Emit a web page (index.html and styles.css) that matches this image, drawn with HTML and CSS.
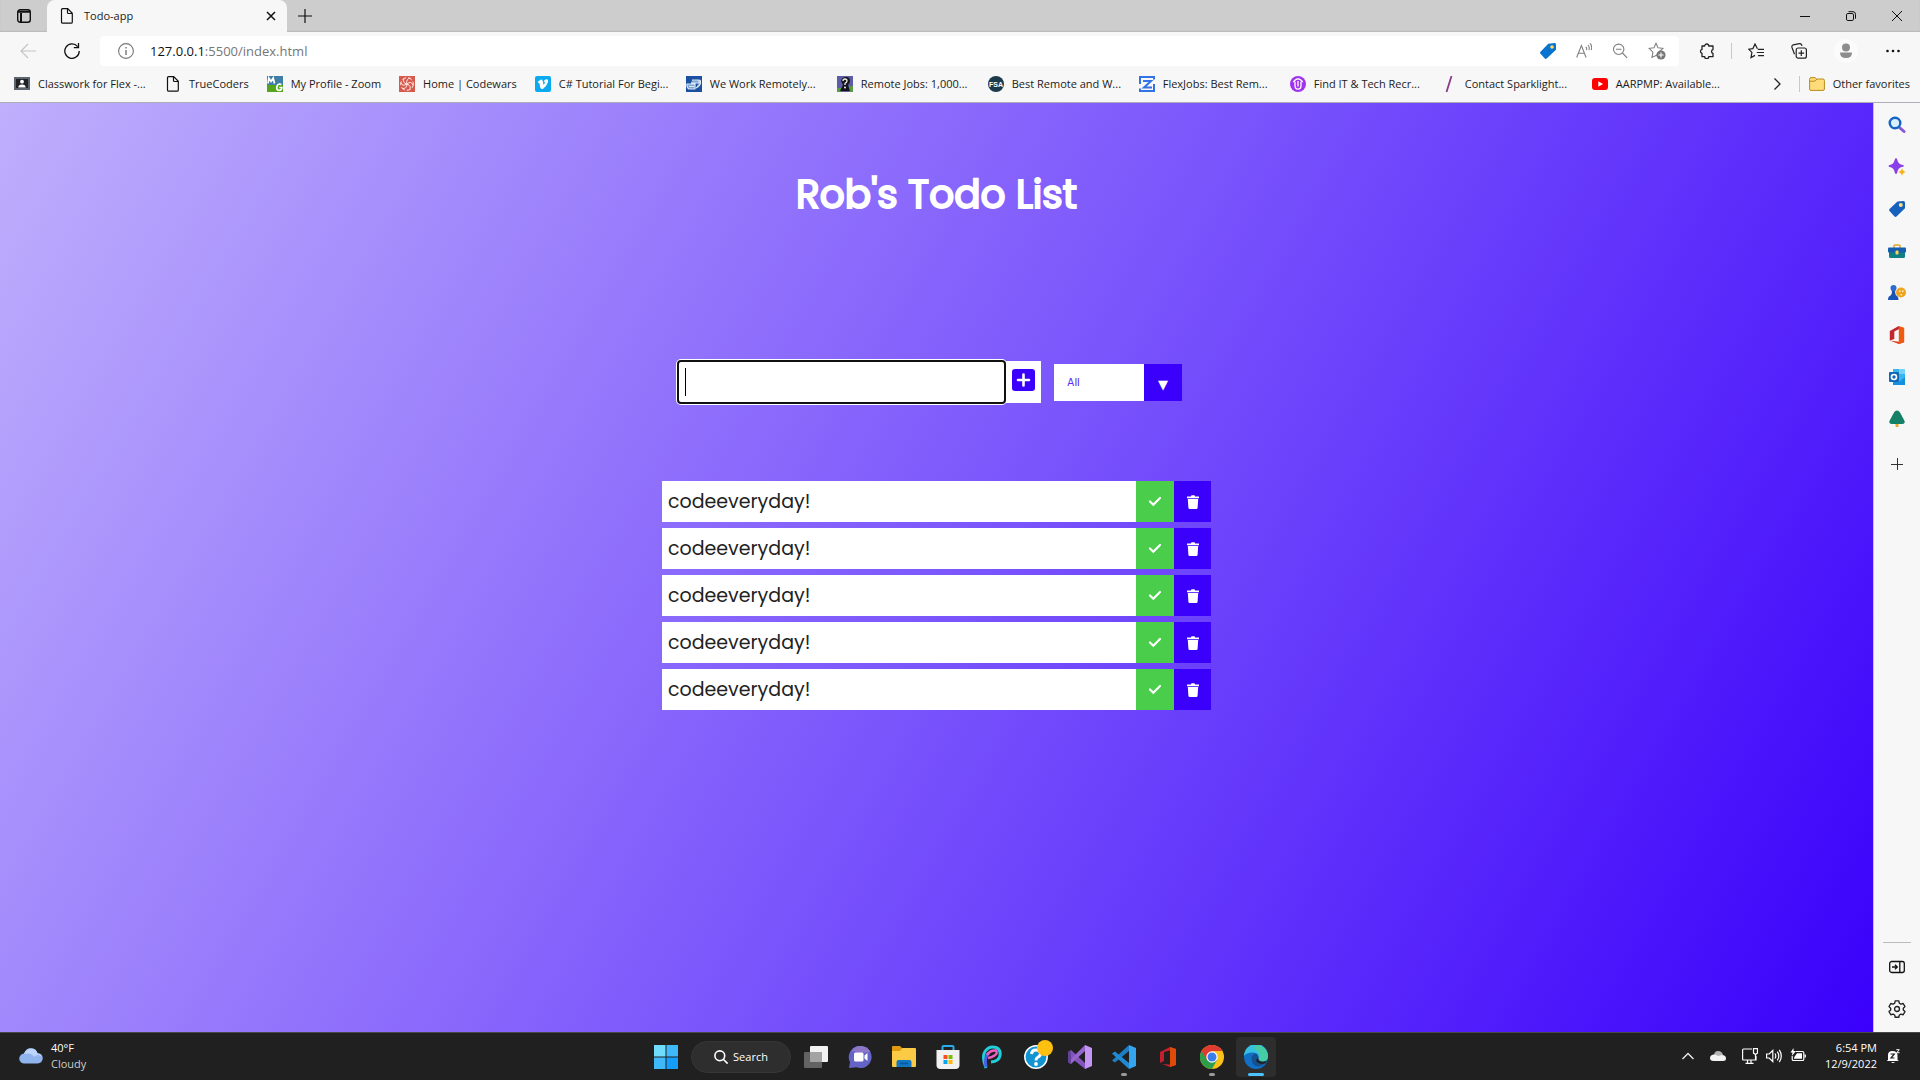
FILE: index.html
```html
<!DOCTYPE html>
<html lang="en">
<head>
<meta charset="utf-8">
<title>Todo-app</title>
<link rel="stylesheet" href="styles.css">
</head>
<body>
<div class="browser">
  <header class="chrome">
    <div class="titlebar">
      <button class="tab-actions" aria-label="Tab actions"><svg class="i16" viewBox="0 0 16 16" fill="none" stroke="#111" stroke-width="1.4"><rect x="1.7" y="1.7" width="12.6" height="12.6" rx="2.5"/><path d="M2 3.8h12M5 5v9" stroke-width="2"/></svg></button>
      <div class="tab">
        <svg class="i16" viewBox="0 0 16 16" fill="none" stroke="#111" stroke-width="1.2"><path d="M3.5.7h5.2l4.6 4.6v8.6a1.3 1.3 0 0 1-1.3 1.3H3.8a1.3 1.3 0 0 1-1.3-1.3V1.7a1 1 0 0 1 1-1zM8.5.9v3.6a1 1 0 0 0 1 1h3.6"/></svg>
        <span class="tab-title">Todo-app</span>
        <button aria-label="Close tab"><svg class="i10" viewBox="0 0 10 10" stroke="#111" stroke-width="1.5"><path d="M1 1l8 8M9 1l-8 8"/></svg></button>
      </div>
      <button class="new-tab" aria-label="New tab"><svg class="i14" viewBox="0 0 14 14" stroke="#111" stroke-width="1.2"><path d="M7 0v14M0 7h14"/></svg></button>
      <div class="window-controls">
        <button aria-label="Minimize"><svg class="i10" viewBox="0 0 10 10" stroke="#111"><path d="M0 5.5h10"/></svg></button>
        <button aria-label="Restore"><svg class="i10" viewBox="0 0 10 10" fill="none" stroke="#111"><rect x=".5" y="2.5" width="7" height="7" rx="1.4"/><path d="M2.5 .7H7a2.5 2.5 0 0 1 2.5 2.5v4.5"/></svg></button>
        <button aria-label="Close"><svg class="i10" viewBox="0 0 10 10" stroke="#111"><path d="M0 0l10 10M10 0L0 10"/></svg></button>
      </div>
    </div>
    <div class="toolbar">
      <nav class="history">
        <button aria-label="Back"><svg class="i16" viewBox="0 0 16 16" fill="none" stroke="#c4c4c4" stroke-width="1.2"><path d="M16 8H1M8 1L1 8l7 7"/></svg></button>
        <button aria-label="Refresh"><svg class="i16" viewBox="0 0 16 16" fill="none" stroke="#111" stroke-width="1.3"><path d="M13.6 3.6A7.2 7.2 0 1 0 15.2 8M14.5 0v4.6H9.8"/></svg></button>
      </nav>
      <div class="address">
        <svg class="i16" viewBox="0 0 16 16" fill="none" stroke="#777" stroke-width="1.1"><circle cx="8" cy="8" r="7.4"/><path d="M8 7v5M8 4v1.5" stroke-width="1.4"/></svg>
        <span class="url"><b>127.0.0.1</b>:5500/index.html</span>
        <div class="address-tools">
          <button aria-label="Shopping"><svg class="i16" viewBox="0 0 16 16"><path d="M8.3.8 14.5 0Q16 0 16 1.4v5.3L6.7 15.5q-1 .8-1.9 0L.5 10.8q-.9-1 0-2z" fill="#0874cf"/><circle cx="12" cy="4" r="1.8" fill="#ffdc58"/></svg></button>
          <button aria-label="Read aloud"><svg class="i16" viewBox="0 0 16 16" fill="none" stroke="#808080" stroke-width="1.1"><path d="M.7 14.5 5.4 2.5l4.7 12M2.3 10.3h6.2M9.8 3.8q1.400 1.400.6 3.200M12 2q2 2.300.9 5M14 .4q2.600 3 1.200 6.600"/></svg></button>
          <button aria-label="Zoom out"><svg class="i16" viewBox="0 0 16 16" fill="none" stroke="#808080" stroke-width="1.1"><circle cx="6.7" cy="6.3" r="5.2"/><path d="M10.5 10l4.6 4.9M4 6.3h5.4"/></svg></button>
          <button aria-label="Add to favorites"><svg class="i18" viewBox="0 0 18 18" fill="none" stroke="#808080" stroke-width="1.1"><path d="M8 1.3l2 4.400 4.900.6-3.600 3.300L9 13l-5 2.400.9-5.200L1.200 6.300 6 5.700z"/><circle cx="13" cy="13" r="4.600" fill="#777" stroke="none"/><path d="M13 10.400v5.200M10.400 13h5.200" stroke="#fff"/></svg></button>
        </div>
      </div>
      <div class="tools">
        <button aria-label="Extensions"><svg class="i16" viewBox="0 0 16 16" fill="none" stroke="#222" stroke-width="1.3"><path d="M5.700 3a2 2 0 0 1 4 0H14v3.700a1.900 1.900 0 0 0 0 3.700v3.300h-4.300a2 2 0 0 1-4 0H3v-3.400a2 2 0 0 1 0-3.900V3z" stroke-linejoin="round"/></svg></button>
        <i class="divider"></i>
        <button aria-label="Favorites"><svg class="i16" viewBox="0 0 16 16" fill="none" stroke="#222" stroke-width="1.2"><path d="M9.400 5.800 7 1 4.900 5.600.7 6.200l3.200 3.200L3 14.600l4-2.200M9.800 6.300H16M8.800 9.500H16M10 12.700h6"/></svg></button>
        <button aria-label="Collections"><svg class="i16" viewBox="0 0 16 16" fill="none" stroke="#222" stroke-width="1.2"><rect x="5.200" y="5" width="10.200" height="10.200" rx="2"/><path d="M10.300 7.300v5.600M7.500 10.100h5.600M3.500 11.300 1 4.500Q.4 2.500 2.200 1.800L8.500.6q1.900-.2 2.600 2.200"/></svg></button>
        <button class="profile" aria-label="Profile"><svg class="i16" viewBox="0 0 16 16" fill="#8d8d8d"><circle cx="8" cy="4.500" r="4"/><path d="M2 9.500h12q0 5.500-6 5.500t-6-5.500z"/></svg></button>
        <button aria-label="More"><svg class="i16" viewBox="0 0 16 16" fill="#111"><circle cx="2.500" cy="8" r="1.300"/><circle cx="8" cy="8" r="1.300"/><circle cx="13.500" cy="8" r="1.300"/></svg></button>
      </div>
    </div>
    <nav class="bookmarks">
      <a href="#" class="cut"><svg class="i16" viewBox="0 0 16 16"><path d="M0 1h16v13H0z" fill="#5c6470"/><path d="M2 3h12v9H2z" fill="#202124"/><circle cx="8" cy="5.700" r="1.900" fill="#fff"/><path d="M4.300 11.500q0-3 3.700-3t3.700 3z" fill="#fff"/></svg>Classwork for Flex -...</a>
      <a href="#"><svg class="i16" viewBox="0 0 16 16" fill="none" stroke="#111" stroke-width="1.2"><path d="M3.500.7h5.200l4.600 4.600v8.600a1.300 1.300 0 0 1-1.300 1.300H3.800a1.300 1.300 0 0 1-1.300-1.300V1.700a1 1 0 0 1 1-1zM8.500.9v3.600a1 1 0 0 0 1 1h3.600"/></svg>TrueCoders</a>
      <a href="#"><svg class="i16" viewBox="0 0 16 16" fill="none" stroke="#fff" stroke-width="1.700"><path d="M0 0h16v9H0z" fill="#3f7ea6" stroke="none"/><path d="M0 9h16v7H0z" fill="#55a51c" stroke="none"/><path d="M1 7.500 1.800 2l2.200 3.500L6.200 2 7.500 7.500M14.500 8.500q-3.500-1.500-4.500 2t2 4q2.800-.3 2.800-3h-2.500"/></svg>My Profile - Zoom</a>
      <a href="#"><svg class="i16" viewBox="0 0 16 16" fill="none" stroke="#ffe9e4"><path d="M0 0h16v16H0z" fill="#d75a4e" stroke="none"/><path d="M8 8Q3 7 5 2.500M8 8q-1.500-5 3.500-6M8 8q4-3.500 6 1M8 8q5 2 2.500 6M8 8q0 5-5 4.500M8 8q-5 3-6-1.500"/><circle cx="8" cy="8" r="6.300" stroke-dasharray="4 2"/></svg>Home | Codewars</a>
      <a href="#" class="cut"><svg class="i16" viewBox="0 0 16 16"><rect width="16" height="16" rx="2" fill="#0baaf0"/><path d="M2.800 5.700 6 3.600q1.400-.2 1.800 1.700l.8 3.700q1.800-2.200 1.200-3-.4-.5-1.200-.2.800-2.800 3-2.600 2.200.3 1.200 3.200-1.500 4.200-4.600 6.400-2 .9-2.900-1L4.300 6.700l-1 .3z" fill="#fff"/></svg>C# Tutorial For Begi...</a>
      <a href="#" class="cut"><svg class="i16" viewBox="0 0 16 16" fill="none" stroke="#dce9f7" stroke-width="1.200"><path d="M0 0h16v16H0z" fill="#1b4f9f" stroke="none"/><path d="M6 4h7v3H5M1 8h8v5H3q-2-1-2-3zM3 10.500h5M14 4q2 5-4 8" fill="#7da3d3"/></svg>We Work Remotely...</a>
      <a href="#" class="cut"><svg class="i16" viewBox="0 0 16 16"><path d="M0 0h16v16H0z" fill="#5b5da5"/><path d="M0 12h4v4H0zM12 10h4v6h-4z" fill="#5c9b45"/><path d="M3 15l3-6-2-4q1-4 5-4t4 4q0 2-2 4l2 6z" fill="#17151c"/><path d="M6 5q0-2 2-2t2 2q0 1-2 2.500V9" fill="none" stroke="#eee" stroke-width="1.300"/><circle cx="8" cy="11.500" r="1" fill="#eee"/></svg>Remote Jobs: 1,000...</a>
      <a href="#" class="cut"><svg class="i16" viewBox="0 0 16 16"><circle cx="8" cy="8" r="8" fill="#1b3a4c"/><text x="8" y="11" text-anchor="middle" class="fsa">FSA</text></svg>Best Remote and W...</a>
      <a href="#" class="cut"><svg class="i16" viewBox="0 0 16 16" fill="none" stroke="#3274e6" stroke-width="2"><path d="M1 8V1h14v2.500M15 8v7H1v-2.500M4 5h8l-7 6.500h8"/></svg>FlexJobs: Best Rem...</a>
      <a href="#" class="cut"><svg class="i16" viewBox="0 0 16 16" fill="none" stroke="#fff" stroke-width="1.300"><circle cx="8" cy="8" r="8" fill="#a133ee" stroke="none"/><path d="M3.300 6Q8-.5 12.700 6M5 5.800v3.700q0 3.700 3 3.700t3-3.700V5.800M8 5v5.500"/></svg>Find IT &amp; Tech Recr...</a>
      <a href="#" class="cut"><svg class="i16" viewBox="0 0 16 16" stroke="#8a3b85" stroke-width="1.800"><path d="M10.500 0 5.500 16"/></svg>Contact Sparklight...</a>
      <a href="#" class="cut"><svg class="i16" viewBox="0 0 16 16"><rect y="2" width="16" height="12" rx="3" fill="#f00"/><path d="M6.300 5.300v5.400L11 8z" fill="#fff"/></svg>AARPMP: Available...</a>
      <div class="bookmarks-end">
        <button aria-label="More favorites"><svg class="chev" viewBox="0 0 8 12" fill="none" stroke="#222" stroke-width="1.300"><path d="M1.500.5 7 6l-5.500 5.500"/></svg></button>
        <i class="divider"></i>
        <a href="#"><svg class="i16" viewBox="0 0 16 16"><path d="M.6 13V3.300Q.6 1.600 2 1.600h4L7.500 3H14q1.400 0 1.400 1.400V13q0 1.400-1.400 1.400H2Q.6 14.400.6 13z" fill="#ffdc7a" stroke="#b88a1b"/><path d="M1 5.200h5L8 3" fill="none" stroke="#b88a1b"/></svg>Other favorites</a>
      </div>
    </nav>
  </header>

  <div class="middle">
    <main class="app">
      <h1>Rob's Todo List</h1>
      <form class="todo-form">
        <input type="text" class="todo-input" aria-label="New todo">
        <button type="button" class="add" aria-label="Add todo"><svg viewBox="0 0 23 22"><rect width="23" height="22" rx="3" fill="#3a00fb"/><path d="M11.500 5.500v11M6 11h11" stroke="#fff" stroke-width="2.600" stroke-linecap="round"/></svg></button>
        <label class="filter"><select aria-label="Filter todos"><option>All</option><option>Completed</option><option>Uncompleted</option></select></label>
      </form>
      <ul class="todo-list">
        <li><span>codeeveryday!</span><button class="done" aria-label="Complete"><svg class="i14" viewBox="0 0 14 14"><use href="#check"/></svg></button><button class="trash" aria-label="Delete"><svg class="i14" viewBox="0 0 14 14"><use href="#bin"/></svg></button></li>
        <li><span>codeeveryday!</span><button class="done" aria-label="Complete"><svg class="i14" viewBox="0 0 14 14"><use href="#check"/></svg></button><button class="trash" aria-label="Delete"><svg class="i14" viewBox="0 0 14 14"><use href="#bin"/></svg></button></li>
        <li><span>codeeveryday!</span><button class="done" aria-label="Complete"><svg class="i14" viewBox="0 0 14 14"><use href="#check"/></svg></button><button class="trash" aria-label="Delete"><svg class="i14" viewBox="0 0 14 14"><use href="#bin"/></svg></button></li>
        <li><span>codeeveryday!</span><button class="done" aria-label="Complete"><svg class="i14" viewBox="0 0 14 14"><use href="#check"/></svg></button><button class="trash" aria-label="Delete"><svg class="i14" viewBox="0 0 14 14"><use href="#bin"/></svg></button></li>
        <li><span>codeeveryday!</span><button class="done" aria-label="Complete"><svg class="i14" viewBox="0 0 14 14"><use href="#check"/></svg></button><button class="trash" aria-label="Delete"><svg class="i14" viewBox="0 0 14 14"><use href="#bin"/></svg></button></li>
      </ul>
    </main>
    <aside class="sidebar">
      <button aria-label="Search"><svg class="i18" viewBox="0 0 18 18" fill="none"><path d="m11.500 11.500 4.500 4" stroke="#8458d9" stroke-width="3" stroke-linecap="round"/><circle cx="7" cy="7" r="5.300" fill="#d7f0fb" stroke="#1763c5" stroke-width="2.400"/></svg></button>
      <button aria-label="Discover"><svg class="i18" viewBox="0 0 18 18"><path d="M8 0q1 0 1.500 2.500.8 3.500 4.500 4.300 2 .5 2 1.200t-2 1.100q-3.700.8-4.500 4.400Q9 16 8 16t-1.500-2.500Q5.700 10 2.500 9.200.5 8.700.5 8t2-1.200Q5.700 6 6.500 2.500 7 0 8 0z" fill="#8b3fe8"/><path d="M14 10q.7 3.300 4 4-3.300.7-4 4-.7-3.300-4-4 3.300-.7 4-4z" fill="#f5b31d"/></svg></button>
      <button aria-label="Shopping"><svg class="i18" viewBox="0 0 18 18"><path d="M9.500 1.500 15.500 1Q17 1 17 2.500v5.800L8.500 16.500q-1 .8-2 0L1.500 11q-.9-1 0-2z" fill="#1561bd"/><circle cx="12.800" cy="5" r="2" fill="#ffe178"/></svg></button>
      <button aria-label="Tools"><svg class="i18" viewBox="0 0 18 18"><path d="M6 6V4q0-1 1-1h4q1 0 1 1v2" fill="none" stroke="#e0a52b" stroke-width="1.500"/><path d="M1 9h16v5.500q0 1.500-1.500 1.500h-13Q1 16 1 14.500z" fill="#118084"/><rect y="5.500" width="18" height="5" rx="1" fill="#155fae"/><rect x="7.500" y="8.500" width="3" height="4" rx="1" fill="#ffd454"/></svg></button>
      <button aria-label="Games"><svg class="i18" viewBox="0 0 18 18"><circle cx="13" cy="8.500" r="5" fill="#eda523"/><path d="M11 6.500h1.500v1.500H11zM14 6.500h1.500v1.500H14zM12.500 10H14v1.500h-1.500z" fill="#fff0bf"/><circle cx="5.500" cy="4" r="3" fill="#2b6cd1"/><path d="M3 6.500h5l-1 1q0 3.500 2.500 5 1 .5 1 3.500H0q0-3 1-3.500Q4 11 4 7.500z" fill="#1953b5"/></svg></button>
      <button aria-label="Office"><svg class="i18" viewBox="0 0 18 20"><path d="M1 5.500 11 0l1 3-6 3v8.500L1 16z" fill="#c4262e"/><path d="M1 16l10 1.500L17 18l-6 2z" fill="#dc3a1b"/><path d="M11 0l6 2v16l-6 2z" fill="#f05a10"/></svg></button>
      <button aria-label="Outlook"><svg class="i18" viewBox="0 0 18 18"><path d="M5 1h11q1 0 1 1v14H5z" fill="#37b5ee"/><path d="M11 1h6v5h-6z" fill="#75d2fb"/><path d="M5 12l6 2 6-5v8H5z" fill="#1490df"/><rect x="1" y="4" width="10" height="10" rx="1" fill="#0f68b8"/><circle cx="6" cy="9" r="2.500" fill="none" stroke="#fff" stroke-width="1.600"/></svg></button>
      <button aria-label="Drop"><svg class="i18" viewBox="0 0 18 18"><path d="M7.500 13h3v3.500q-1.500 1-3 0z" fill="#eda523"/><path d="M9 .5q2 0 3 2l1.500 2.700 2.700 5Q18 13.500 14 14H4Q0 13.500 1.800 10.200l2.700-5L6 2.500q1-2 3-2z" fill="#148068"/></svg></button>
      <button class="add-app" aria-label="Add"><svg class="i12" viewBox="0 0 12 12" stroke="#333"><path d="M6.500 0v12M0 6.500h12"/></svg></button>
      <hr>
      <button aria-label="Hide sidebar"><svg class="i16" viewBox="0 0 16 16" fill="none" stroke="#111" stroke-width="1.300"><rect x=".7" y="2.500" width="14.600" height="11" rx="2"/><path d="M10.800 2.500v11M3 8h5M6 5.800 8.300 8 6 10.200"/></svg></button>
      <button aria-label="Settings"><svg class="i18" viewBox="0 0 16 16" fill="none" stroke="#222" stroke-width="1.200"><path d="M6.400.8h3.200l.5 2.100 1.300.8 2.100-.6 1.600 2.800-1.500 1.500v1.500l1.500 1.400-1.600 2.800-2.100-.6-1.300.8-.5 2H6.400l-.5-2-1.300-.8-2.100.6-1.600-2.800 1.500-1.400V7.400L.9 5.900l1.600-2.800 2.100.6 1.300-.8z" stroke-linejoin="round"/><circle cx="8" cy="8" r="2.200"/></svg></button>
    </aside>
  </div>

  <footer class="taskbar">
    <button class="weather"><svg viewBox="0 0 24 16"><path d="M5.500 15.500a5 5 0 0 1-.5-10Q7 0 12.500.3q5 .3 6 5 5 0 5.300 5-.3 5-5.300 5.200z" fill="#8fb4ee"/><path d="M5 6q8-2 10 3 4-4 8 0-1-3-4.500-3.700Q17 .5 12 .5T5 6z" fill="#bdd5fa"/></svg><span>40°F<small>Cloudy</small></span></button>
    <div class="pinned">
      <button aria-label="Start"><svg class="i24" viewBox="0 0 24 24" fill="#3fb8fa"><path d="M0 0h11.500v11.500H0z" fill="#6fdcfd"/><path d="M12.500 0H24v11.500H12.500zM0 12.500h11.500V24H0z"/><path d="M12.500 12.500H24V24H12.500z" fill="#159dfb"/></svg></button>
      <button class="search"><svg class="i14" viewBox="0 0 14 14" fill="none" stroke="#fff" stroke-width="1.600"><circle cx="5.800" cy="5.800" r="4.900"/><path d="m9.300 9.300 4.300 4.300"/></svg>Search</button>
      <button aria-label="Task view"><svg class="i24" viewBox="0 0 24 24"><rect x="6" y="1" width="18" height="16" rx="1" fill="#f2f2f2"/><rect y="7" width="18" height="16" rx="1" fill="#636363"/><path d="M6 7h12v10H6z" fill="#a3a3a3"/></svg></button>
      <button aria-label="Chat"><svg class="i24" viewBox="0 0 24 24"><path d="M12.500 1a11 11 0 1 1-4 21.200L1 23l1-6A11 11 0 0 1 12.500 1z" fill="#6464c8"/><path d="M12.500 1a11 11 0 0 0-9 5q9 3 19 1a11 11 0 0 0-10-6z" fill="#8c77c9"/><rect x="6" y="7.500" width="9.500" height="9" rx="1.500" fill="#fff"/><path d="m16.500 10.500 3-2.500v8l-3-2.500z" fill="#fff"/></svg></button>
      <button aria-label="File Explorer"><svg class="i24" viewBox="0 0 24 24"><path d="M0 2q0-1 1-1h7l2.500 2.500V8H0z" fill="#e09a10"/><path d="M0 6h8l2.500-3H23q1 0 1 1v17q0 1-1 1H1q-1 0-1-1z" fill="#fccb45"/><path d="M4.500 22v-5q0-2 2-2h11q2 0 2 2v5z" fill="#1277c3"/><path d="M8 18.500h8" stroke="#0a569a" stroke-width="1.500"/></svg></button>
      <button aria-label="Microsoft Store"><svg class="i24" viewBox="0 0 24 24"><path d="M6.500 7V2q0-1 1-1h9q1 0 1 1v5" fill="none" stroke="#27aeea" stroke-width="2"/><path d="M.5 5h23v15q0 4-4 4h-15q-4 0-4-4z" fill="#f1f1f1"/><path d="M7.500 10h4v4h-4z" fill="#f25022"/><path d="M12.500 10h4v4h-4z" fill="#7fba00"/><path d="M7.500 15h4v4h-4z" fill="#00a4ef"/><path d="M12.500 15h4v4h-4z" fill="#ffb900"/></svg></button>
      <button aria-label="PicsArt"><svg class="i24" viewBox="0 0 24 24" fill="none"><path d="M6 23Q1.500 12 5 6.500q4-6 11-4 5 2 4 8-1 6-9 6.500" stroke="#20cfd8" stroke-width="3"/><path d="M6 22Q4 11 9 8" stroke="#4462e4" stroke-width="3"/><path d="M7 10q3-5 9-4.500 2 3-1.500 5Q12 12.500 8 13" stroke="#ee5fc4" stroke-width="2.500"/></svg></button>
      <button class="help" aria-label="Get Help"><svg class="i24" viewBox="0 0 24 24"><circle cx="12" cy="12" r="11.200" fill="#1394d2" stroke="#fff" stroke-width="1.500"/><path d="M7.500 9Q8 5 12 5t4.500 3.500q0 2.500-3 4-1.500.8-1.500 3" fill="none" stroke="#fff" stroke-width="3"/><circle cx="12" cy="19" r="1.900" fill="#fff"/></svg></button>
      <button aria-label="Visual Studio"><svg class="i24" viewBox="0 0 24 24"><path d="M0 7 3 5l14 13v6L3.500 13 3 19l-3-2z" fill="#8553bd"/><path d="m0 17 3 2L17 6V0L4 13z" fill="#9566cd"/><path d="M0 7l3-2v14l-3-2z" fill="#64429a"/><path d="m17 0 7 3v18l-7 3z" fill="#c495f4"/></svg></button>
      <button class="running" aria-label="VS Code"><svg class="i24" viewBox="0 0 24 24"><path d="m17 6L3 17.500 0 15.500 17 0z" fill="#1c7fc4"/><path d="M17 18 3 6.500 0 8.500 17 24z" fill="#1f8bd4"/><path d="m17 0 7 3v18l-7 3z" fill="#35a5ef"/></svg></button>
      <button aria-label="Office"><svg class="i24" viewBox="0 0 24 24"><path d="M4 7 14 2l6 2v16l-6 2-8-3 8 .5V5.500L8 7v9l-4 2z" fill="#c3202d"/><path d="m14 2 6 2v16l-6 2z" fill="#e04a08"/></svg></button>
      <button class="running" aria-label="Chrome"><svg class="i24" viewBox="0 0 24 24"><circle cx="12" cy="12" r="12" fill="#fbc116"/><path d="M12 12 1.600 6a12 12 0 0 0 10.400 18l5-9z" fill="#2e9e4b"/><path d="M1.600 6a12 12 0 0 1 20.800 0H12l-5 9z" fill="#e03b30"/><circle cx="12" cy="12" r="5.700" fill="#fff"/><circle cx="12" cy="12" r="4.500" fill="#3b7ded"/></svg></button>
      <button class="running active" aria-label="Edge"><svg class="i24" viewBox="0 0 24 24"><circle cx="12" cy="12" r="12" fill="#1270c4"/><path d="M0 11A12 12 0 0 1 24 11q0 5-5 5.500-5 0-4.500-3Q15 8 9 7.500 2 7.500 0 11z" fill="#35bfe0"/><path d="M12 0a12 12 0 0 1 12 11q0 5-5 5.500-5 0-4.500-3 3-6-5-10z" fill="#4fd08c" opacity=".7"/><path d="M7.500 14q0-5 4.500-5.500 2.500 1 2.500 4-1 1.500.5 3 3 2.500 7.500.5-3 5-8.500 5.500-6-1-6.500-7.500z" fill="#15508f"/><path d="M14.500 12.500q-1 1.500.5 3 3 2.500 8 .3l-1.500 2.500q-5 2-8.500-1-2-2.500 1.500-4.800z" fill="#222"/></svg></button>
    </div>
    <div class="tray">
      <button aria-label="Show hidden icons"><svg class="i12" viewBox="0 0 12 12" fill="none" stroke="#eee" stroke-width="1.300"><path d="M.5 9 6 3.500 11.500 9"/></svg></button>
      <button class="cloud" aria-label="OneDrive"><svg class="i16" viewBox="0 0 16 16"><path d="M4 8q0-5 4-5t5 4l-3 3z" fill="#b4b4b4"/><path d="M3.500 13Q0 13 0 10t3.500-3.500Q6 6 8 8l4-1q4 0 4 3.500 0 2.500-3 2.500z" fill="#f3f3f3"/></svg></button>
      <div class="status">
        <svg class="i16" viewBox="0 0 16 16" fill="none" stroke="#fff" stroke-width="1.200"><path d="M10 1H1.500q-.9 0-.9 1v9q0 1 .9 1H14V8M3.500 15.300h8M5.500 12v3M9 12v3M11.500.6h4v4.500l-2 1.500-2-1.500zM13.500 6.500V12"/></svg>
        <svg class="i16" viewBox="0 0 16 16" fill="none" stroke="#fff" stroke-width="1.200"><path d="M.6 6h2.600L6.800 2.500v11L3.200 10H.6zM9 5.500q1.600 2.500 0 5M11.300 3.600q3 4.400 0 8.800M13.300 1.800q4 6.200 0 12.400"/></svg>
        <svg class="i16" viewBox="0 0 16 16" fill="none" stroke="#fff" stroke-width="1.200"><path d="M6 3.500h6.500q1.300 0 1.300 1.300v6.400q0 1.300-1.300 1.300h-9q-1.300 0-1.300-1.300V8M15.300 6.500v3"/><path d="M7 5.200h5v5.600H4V9.500z" fill="#fff" stroke="none"/><path d="M3.500 0 .5 4.500h2L1.800 8 6 3H3.500z" fill="#fff" stroke="none"/></svg>
      </div>
      <time>6:54 PM<br>12/9/2022</time>
      <button aria-label="Notifications"><svg class="i14" viewBox="0 0 14 14"><path d="M2 11V6q0-4 4.500-4t5 4v5l1.500 1H.5zM5 13h4q-2 2-4 0z" fill="#fff"/><path d="M4.500 5h3.800L5 9h3.500" fill="none" stroke="#202020" stroke-width="1.200"/><path d="M10.300.7h3l-2.500 3h2.700" fill="none" stroke="#fff"/></svg></button>
    </div>
  </footer>
</div>

<svg class="defs" aria-hidden="true"><defs>
  <path id="check" d="M2 6.500 5.300 9.700 12 3" fill="none" stroke="#fff" stroke-width="2.200" stroke-linecap="round"/>
  <path id="bin" d="M1 1.500h3.800L5.500.2h3l.7 1.300H13v1.700H1zM1.800 4h10.400l-.6 8.700q-.1 1.300-1.300 1.300H3.700q-1.200 0-1.300-1.300z" fill="#fff"/>
</defs></svg>
</body>
</html>
```
FILE: styles.css
```css
* { box-sizing: border-box; }
body { margin: 0; font: 11px/16px "Open Sans", "Noto Sans", sans-serif; color: #1b1b1b; }
button { border: 0; padding: 0; background: none; color: inherit; font: inherit; display: flex; align-items: center; justify-content: center; }
a { color: inherit; text-decoration: none; }
svg { display: block; flex: none; }
.defs { position: absolute; width: 0; height: 0; }
.i10 { width: 10px; height: 10px; }
.i12 { width: 12px; height: 12px; }
.i14 { width: 14px; height: 14px; }
.i16 { width: 16px; height: 16px; }
.i18 { width: 18px; height: 18px; }
.i24 { width: 24px; height: 24px; }
.browser { min-height: 100vh; display: flex; flex-direction: column; }

.chrome { background: #f7f7f7; }
.titlebar { display: flex; height: 32px; background: #cdcdcd; box-shadow: inset 0 -1px 1px #bbb; }
.tab-actions { width: 47px; }
.tab { display: flex; align-items: center; gap: 9px; width: 240px; padding: 0 11px 0 12px; background: #f7f7f7; border-radius: 8px 8px 0 0; }
.tab-title { flex: 1; }
.new-tab { width: 36px; }
.window-controls { display: flex; margin-left: auto; }
.window-controls button { width: 46px; }
.toolbar { display: flex; align-items: center; padding: 4px 0; }
.history { display: flex; gap: 28px; padding: 0 20px; }
.address { flex: 1; display: flex; align-items: center; gap: 16px; height: 30px; padding: 0 13px 0 18px; background: #fff; border-radius: 4px; }
.url { flex: 1; font-size: 13px; color: #767676; }
.url b { font-weight: 400; color: #111; }
.address-tools { display: flex; gap: 20px; }
.tools { display: flex; align-items: center; gap: 27px; padding: 0 19px 0 20px; }
.divider { width: 1px; height: 16px; background: #c8c8c8; }
.tools .divider { margin: 0 -11px; }
.profile { width: 24px; height: 24px; border-radius: 50%; background: #fbfbfb; }
.bookmarks { display: flex; gap: 18px; height: 33px; padding: 0 10px 5px 14px; align-items: center; border-bottom: 1px solid #adadb5; white-space: nowrap; }
.bookmarks a { display: flex; align-items: center; gap: 8px; }
.bookmarks .cut { width: 133px; }
.bookmarks-end { display: flex; align-items: center; gap: 9px; margin-left: auto; }
.bookmarks-end button { margin-right: 9px; }
.chev { width: 8px; height: 12px; }
.fsa { font: 700 7px "Liberation Sans", sans-serif; fill: #fff; }

.middle { flex: 1; display: flex; }
.app { flex: 1; display: flex; flex-direction: column; align-items: center; background: linear-gradient(120deg, #bfaffc, #3a00fb); }
h1 { margin: 62px 0 135px; font: 400 39px/60px Poppins, sans-serif; color: #fff; -webkit-text-stroke: 2px #fff; }
.todo-form { display: flex; align-items: center; width: 549px; padding-left: 15px; }
.todo-input { width: 329px; height: 44px; border: 2px solid #111; border-radius: 4px; padding: 0 8px; box-shadow: 0 0 0 1px #fff; font: 20px Poppins, sans-serif; background: linear-gradient(#000, #000) 6px center / 1px 28px no-repeat #fff; }
.add { width: 35px; height: 42px; padding-bottom: 4px; background: #fff; }
.add svg { width: 23px; height: 22px; }
.filter { position: relative; margin-left: 13px; }
.filter select { display: block; appearance: none; width: 128px; height: 37px; padding: 0 13px; border: 0; border-radius: 0; background: #fff; color: #5a2cf5; font: 11px Poppins, sans-serif; }
.filter::after { content: "▼"; position: absolute; inset: 0 0 0 auto; width: 38px; padding-top: 2px; background: #3a00fb; color: #fff; font: 13px/37px "DejaVu Sans", sans-serif; text-align: center; pointer-events: none; }
.todo-list { list-style: none; width: 549px; margin: 77px 0 0; padding: 0; display: grid; gap: 6px; }
.todo-list li { display: flex; height: 41px; background: #fff; }
.todo-list span { flex: 1; padding-left: 6px; font: 19px/41px Poppins, sans-serif; color: #222; }
.done { width: 38px; background: #49cd4a; }
.trash { width: 37px; background: #3a00fb; }

.sidebar { width: 47px; display: flex; flex-direction: column; align-items: center; padding: 1px 0 2px; background: #f7f7f7; border-left: 1px solid #c4c4cc; }
.sidebar button { width: 42px; height: 42px; }
.sidebar .add-app { height: 48px; }
.sidebar hr { width: 28px; margin: auto 0 3px; border: 0; border-top: 1px solid #bbb; }

.taskbar { display: grid; grid-template-columns: 1fr auto 1fr; height: 48px; background: #202020; border-top: 1px solid #484848; color: #fff; }
.weather { justify-self: start; gap: 8px; padding: 0 0 2px 19px; text-align: left; }
.weather svg { width: 24px; height: 16px; }
.weather small { display: block; font-size: 11px; color: #ccc; }
.pinned { display: flex; align-items: center; padding-left: 2px; }
.pinned button { position: relative; width: 40px; height: 40px; margin: 0 2px; border-radius: 4px; }
.pinned .search { width: 100px; height: 32px; margin: 0 3px; gap: 5px; border-radius: 16px; background: #2e2e2e; border: 1px solid #363636; }
.help::after { content: ""; position: absolute; right: 3px; top: 3px; width: 16px; height: 16px; border-radius: 50%; background: #ffc012; }
.running::after { content: ""; position: absolute; left: 17px; bottom: 1px; width: 6px; height: 3px; border-radius: 2px; background: #9a9a9a; }
.pinned .active { background: #2d2d2d; }
.active::after { left: 12px; width: 16px; background: #4cc2ff; }
.tray { display: flex; align-items: center; justify-self: end; gap: 16px; padding: 0 20px 2px 0; }
.status { display: flex; gap: 8px; }
time { width: 55px; text-align: right; }
.tray time + button { margin-left: -7px; }
```
